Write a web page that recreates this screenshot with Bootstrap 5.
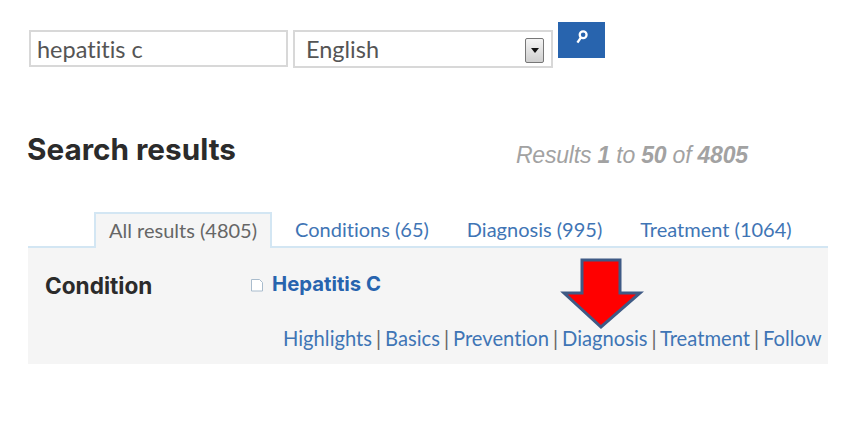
<!DOCTYPE html>
<html lang="en">
<head>
    <meta charset="UTF-8">
    <title>Search results</title>
    <link href="https://cdn.jsdelivr.net/npm/bootstrap@5.3.0/dist/css/bootstrap.min.css" rel="stylesheet">
    <style>
        body {
            background: #fff;
            font-family: "Lato", sans-serif;
            font-variant-ligatures: none;
            overflow: hidden;
        }

        .page-wrap {
            width: 800px;
            margin-left: 28px;
        }

        .search-row {
            padding-top: 22px;
            height: 104px;
        }

        .search-input {
            width: 259px;
            height: 37px;
            margin-top: 8px;
            margin-left: 1px;
            margin-right: 5px;
            border: 2px solid #d8d8d8;
            padding: 0 6px;
            font-size: 23.5px;
            font-variant-ligatures: none;
            line-height: 33px;
            color: #555;
            outline: 0;
        }

        .lang-box {
            width: 260px;
            height: 38px;
            margin-top: 8px;
            margin-right: 5px;
            border: 2px solid #d8d8d8;
            padding: 0 7px 0 11px;
            font-size: 23.5px;
            line-height: 35px;
            color: #555;
        }

        .lang-arrow {
            width: 19px;
            height: 25px;
            margin-top: 2px;
            border: 1px solid #777;
            border-radius: 2px;
            background: linear-gradient(#f4f4f4, #cfcfcf);
        }

        .lang-arrow::after {
            content: "";
            border-left: 4px solid transparent;
            border-right: 4px solid transparent;
            border-top: 5px solid #111;
        }

        .search-btn {
            width: 47px;
            height: 36px;
            background: #2864ae;
            padding: 0 0 6px;
            border: 0;
            border-radius: 0;
        }

        .search-btn svg {
            display: block;
            margin: 0 auto;
        }

        .title-row {
            height: 108px;
        }

        .page-title {
            font-family: "Inter", sans-serif;
            font-size: 29.7px;
            font-weight: 700;
            color: #2b2b2b;
            margin: 0 0 0 -1px;
            padding-top: 28px;
            white-space: nowrap;
        }

        .result-count {
            font-family: "Liberation Sans", sans-serif;
            font-style: italic;
            font-size: 23px;
            color: #a2a2a2;
            margin-left: 280px;
            padding-top: 34px;
            letter-spacing: -.2px;
            white-space: nowrap;
        }

        .result-tabs {
            border-bottom: 2px solid #d3e6f3;
            padding-left: 66px;
            height: 36px;
            flex-wrap: nowrap;
        }

        .result-tabs .nav-link {
            font-size: 20px;
            line-height: 24px;
            color: #3f75b5;
            padding: 5px 15px 0;
            height: 36px;
            margin: 0 8px 0 0;
            border: 0;
            border-radius: 0;
            white-space: nowrap;
        }

        .result-tabs .nav-link.active {
            color: #666;
            background: #f5f5f5;
            border: 2px solid #d3e6f3;
            border-bottom: 0;
            padding: 4px 13px 0;
        }

        .result-panel {
            background: #f5f5f5;
            height: 116px;
            position: relative;
        }

        .cond-label {
            font-family: "Inter", sans-serif;
            width: 224px;
            padding-left: 17px;
            padding-top: 21px;
            font-size: 22.6px;
            font-weight: 700;
            color: #2b2b2b;
        }

        .cond-title {
            padding-top: 21px;
            height: 77px;
        }

        .doc-icon {
            margin: 9px 0 0 -2px;
        }

        .cond-title a {
            font-family: "Inter", sans-serif;
            font-size: 20.3px;
            font-weight: 700;
            color: #2864ae;
            text-decoration: none;
        }

        .cond-links {
            margin-left: 255px;
            font-size: 20.2px;
            word-spacing: -1.2px;
            line-height: 26px;
            color: #666;
            white-space: nowrap;
        }

        .cond-links a {
            color: #3f75b5;
            text-decoration: none;
        }

        .arrow-mark {
            position: absolute;
            left: 532px;
            top: 9px;
        }
    </style>
</head>
<body>
    <div class="page-wrap">
        <div class="search-row d-flex align-items-start">
            <input class="search-input" type="text" value="hepatitis c">
            <div class="lang-box d-flex justify-content-between align-items-center">
                <span>English</span>
                <span class="lang-arrow d-flex justify-content-center align-items-center"></span>
            </div>
            <button class="btn search-btn" type="button" aria-label="Search">
                <svg width="14" height="16" viewBox="0 0 12 14">
                    <circle cx="7" cy="5" r="3" fill="none" stroke="#fff" stroke-width="2"/>
                    <path d="M5 7.5 2 12" stroke="#fff" stroke-width="2"/>
                </svg>
            </button>
        </div>

        <div class="title-row d-flex align-items-start">
            <h1 class="page-title">Search results</h1>
            <div class="result-count">Results <b>1</b> to <b>50</b> of <b>4805</b></div>
        </div>

        <ul class="nav result-tabs">
            <li class="nav-item"><a class="nav-link active" href="#">All results (4805)</a></li>
            <li class="nav-item"><a class="nav-link" href="#">Conditions (65)</a></li>
            <li class="nav-item"><a class="nav-link" href="#">Diagnosis (995)</a></li>
            <li class="nav-item"><a class="nav-link" href="#">Treatment (1064)</a></li>
        </ul>

        <div class="result-panel">
            <div class="d-flex">
                <div class="cond-label">Condition</div>
                <div class="cond-title d-flex align-items-start gap-2">
                    <svg class="doc-icon" width="14" height="14" viewBox="0 0 14 14">
                        <path d="M1.5 1.5h8l3 3v8.500h-11z" fill="#fff" stroke="#a9bccd" stroke-linejoin="round"/>
                    </svg>
                    <a href="#">Hepatitis C</a>
                </div>
            </div>
            <div class="cond-links">
                <a href="#">Highlights</a> | <a href="#">Basics</a> | <a href="#">Prevention</a> | <a href="#">Diagnosis</a> | <a href="#">Treatment</a> | <a href="#">Follow</a>
            </div>
            <svg class="arrow-mark" width="86" height="74" viewBox="0 0 86 74">
                <path d="M22 3h38v33h20L41 70 4 36h18z" fill="#f00" stroke="#3f5a85" stroke-width="3"/>
            </svg>
        </div>
    </div>

    <script src="https://cdn.jsdelivr.net/npm/bootstrap@5.3.0/dist/js/bootstrap.bundle.min.js"></script>
</body>
</html>
